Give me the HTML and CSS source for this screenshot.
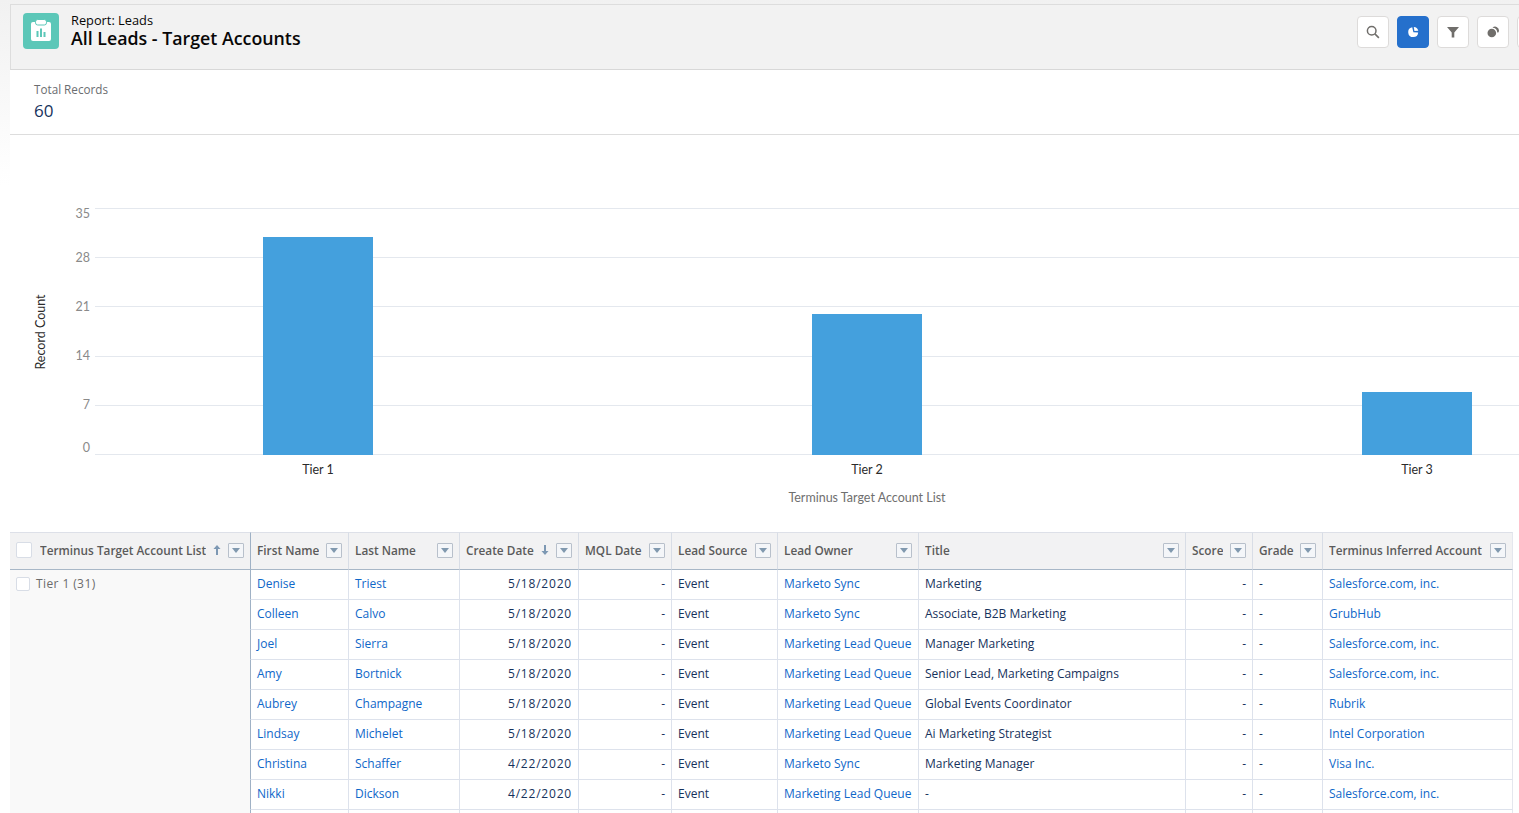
FILE: index.html
```html
<!DOCTYPE html>
<html lang="en">
<head>
    <meta charset="UTF-8">
    <title>All Leads - Target Accounts</title>
    <link rel="stylesheet" href="styles.css">
</head>
<body>
<div class="report">
    <!-- Header -->
    <div class="page-header">
        <div class="report-icon">
            <svg width="36" height="36" viewBox="0 0 36 36">
                <path d="M10 9h16a2 2 0 0 1 2 2v15a2 2 0 0 1-2 2H10a2 2 0 0 1-2-2V11a2 2 0 0 1 2-2z" fill="#fff"/>
                <rect x="12.5" y="6.5" width="11" height="5.5" rx="2.2" fill="#fff" stroke="#5cc7b8" stroke-width="1"/>
                <rect x="13.5" y="18" width="2" height="6" fill="#5cc7b8"/>
                <rect x="17" y="15.5" width="2" height="8.5" fill="#5cc7b8"/>
                <rect x="20.5" y="19" width="2" height="5" fill="#5cc7b8"/>
            </svg>
        </div>
        <div class="titles">
            <div class="eyebrow">Report: Leads</div>
            <h1>All Leads - Target Accounts</h1>
        </div>
        <div class="toolbar">
            <button class="tool">
                <svg width="14" height="14" viewBox="0 0 14 14"><circle cx="5.7" cy="5.7" r="4.3" fill="none" stroke="#706e6b" stroke-width="1.5"/><path d="M8.9 8.9l4 4" stroke="#706e6b" stroke-width="1.6"/></svg>
            </button>
            <button class="tool tool-active">
                <svg width="14" height="14" viewBox="0 0 14 14"><path d="M6.200 2.200a5 5 0 1 0 6 5.300L7.400 7.200z" fill="#fff"/><path d="M7.800 2a5 5 0 0 1 4.500 3.700L8.400 5.900z" fill="#fff"/></svg>
            </button>
            <button class="tool">
                <svg width="14" height="14" viewBox="0 0 14 14"><path d="M1 2h12L8.300 7.400V12.500H5.700V7.400z" fill="#706e6b"/></svg>
            </button>
            <button class="tool">
                <svg width="14" height="14" viewBox="0 0 14 14"><path d="M6.500 2.800a3.800 3.800 0 0 1 6.500 2.700 3 3 0 0 1-.7 2l-1-.1a5 5 0 0 0-4.800-4.600z" fill="#706e6b"/><circle cx="5.800" cy="8" r="4.300" fill="#706e6b"/></svg>
            </button>
            <button class="tool"></button>
        </div>
    </div>

    <!-- Summary -->
    <div class="summary">
        <div class="summary-label">Total Records</div>
        <div class="summary-value">60</div>
    </div>

    <!-- Chart -->
    <div class="chart">
        <svg width="1509" height="397" viewBox="10 135 1509 397">
            <g class="grid">
                <line x1="95" x2="1519" y1="208.500" y2="208.500"/>
                <line x1="95" x2="1519" y1="257.500" y2="257.500"/>
                <line x1="95" x2="1519" y1="306.500" y2="306.500"/>
                <line x1="95" x2="1519" y1="356.500" y2="356.500"/>
                <line x1="95" x2="1519" y1="405.500" y2="405.500"/>
                <line x1="95" x2="1519" y1="454.500" y2="454.500"/>
            </g>
            <g class="ticks">
                <text x="90" y="218">35</text>
                <text x="90" y="262">28</text>
                <text x="90" y="311">21</text>
                <text x="90" y="360">14</text>
                <text x="90" y="409">7</text>
                <text x="90" y="452">0</text>
            </g>
            <g class="bars">
                <rect x="263" y="237" width="110" height="218"/>
                <rect x="812" y="314" width="110" height="141"/>
                <rect x="1362" y="392" width="110" height="63"/>
            </g>
            <g class="labels">
                <text x="318" y="474">Tier 1</text>
                <text x="867" y="474">Tier 2</text>
                <text x="1417" y="474">Tier 3</text>
            </g>
            <text class="axis-title" x="867" y="502">Terminus Target Account List</text>
            <text class="axis-title-y" transform="translate(45 332) rotate(-90)">Record Count</text>
        </svg>
    </div>

    <!-- Table -->
    <table class="leads">
        <colgroup>
            <col class="c-group"><col class="c-first"><col class="c-last"><col class="c-date"><col class="c-mql"><col class="c-source"><col class="c-owner"><col class="c-title"><col class="c-score"><col class="c-grade"><col class="c-account">
        </colgroup>
        <thead>
            <tr>
                <th class="th-group"><div class="th-in"><span class="check"></span><span class="th-label">Terminus Target Account List</span><svg class="sort" width="8" height="10" viewBox="0 0 8 10"><path d="M4 0L7.500 4H5V10H3V4H.5z"/></svg><span class="menu"></span></div></th>
                <th><div class="th-in"><span class="th-label">First Name</span><span class="menu"></span></div></th>
                <th><div class="th-in"><span class="th-label">Last Name</span><span class="menu"></span></div></th>
                <th><div class="th-in"><span class="th-label">Create Date</span><svg class="sort" width="8" height="10" viewBox="0 0 8 10"><path d="M4 10L7.500 6H5V0H3V6H.5z"/></svg><span class="menu"></span></div></th>
                <th><div class="th-in"><span class="th-label">MQL Date</span><span class="menu"></span></div></th>
                <th><div class="th-in"><span class="th-label">Lead Source</span><span class="menu"></span></div></th>
                <th><div class="th-in"><span class="th-label">Lead Owner</span><span class="menu"></span></div></th>
                <th><div class="th-in"><span class="th-label">Title</span><span class="menu"></span></div></th>
                <th><div class="th-in"><span class="th-label">Score</span><span class="menu"></span></div></th>
                <th><div class="th-in"><span class="th-label">Grade</span><span class="menu"></span></div></th>
                <th><div class="th-in"><span class="th-label">Terminus Inferred Account</span><span class="menu"></span></div></th>
            </tr>
        </thead>
        <tbody>
            <tr>
                <td class="group-cell" rowspan="9"><div class="group-in"><span class="check check-small"></span>Tier 1 (31)</div></td>
                <td><a href="#">Denise</a></td><td><a href="#">Triest</a></td><td class="num date">5/18/2020</td><td class="num">-</td><td>Event</td><td><a href="#">Marketo Sync</a></td><td>Marketing</td><td class="num">-</td><td>-</td><td><a href="#">Salesforce.com, inc.</a></td>
            </tr>
            <tr>
                <td><a href="#">Colleen</a></td><td><a href="#">Calvo</a></td><td class="num date">5/18/2020</td><td class="num">-</td><td>Event</td><td><a href="#">Marketo Sync</a></td><td>Associate, B2B Marketing</td><td class="num">-</td><td>-</td><td><a href="#">GrubHub</a></td>
            </tr>
            <tr>
                <td><a href="#">Joel</a></td><td><a href="#">Sierra</a></td><td class="num date">5/18/2020</td><td class="num">-</td><td>Event</td><td><a href="#">Marketing Lead Queue</a></td><td>Manager Marketing</td><td class="num">-</td><td>-</td><td><a href="#">Salesforce.com, inc.</a></td>
            </tr>
            <tr>
                <td><a href="#">Amy</a></td><td><a href="#">Bortnick</a></td><td class="num date">5/18/2020</td><td class="num">-</td><td>Event</td><td><a href="#">Marketing Lead Queue</a></td><td>Senior Lead, Marketing Campaigns</td><td class="num">-</td><td>-</td><td><a href="#">Salesforce.com, inc.</a></td>
            </tr>
            <tr>
                <td><a href="#">Aubrey</a></td><td><a href="#">Champagne</a></td><td class="num date">5/18/2020</td><td class="num">-</td><td>Event</td><td><a href="#">Marketing Lead Queue</a></td><td>Global Events Coordinator</td><td class="num">-</td><td>-</td><td><a href="#">Rubrik</a></td>
            </tr>
            <tr>
                <td><a href="#">Lindsay</a></td><td><a href="#">Michelet</a></td><td class="num date">5/18/2020</td><td class="num">-</td><td>Event</td><td><a href="#">Marketing Lead Queue</a></td><td>Ai Marketing Strategist</td><td class="num">-</td><td>-</td><td><a href="#">Intel Corporation</a></td>
            </tr>
            <tr>
                <td><a href="#">Christina</a></td><td><a href="#">Schaffer</a></td><td class="num date">4/22/2020</td><td class="num">-</td><td>Event</td><td><a href="#">Marketo Sync</a></td><td>Marketing Manager</td><td class="num">-</td><td>-</td><td><a href="#">Visa Inc.</a></td>
            </tr>
            <tr>
                <td><a href="#">Nikki</a></td><td><a href="#">Dickson</a></td><td class="num date">4/22/2020</td><td class="num">-</td><td>Event</td><td><a href="#">Marketing Lead Queue</a></td><td>-</td><td class="num">-</td><td>-</td><td><a href="#">Salesforce.com, inc.</a></td>
            </tr>
            <tr>
                <td></td><td></td><td></td><td></td><td></td><td></td><td></td><td></td><td></td><td></td>
            </tr>
        </tbody>
    </table>
</div>
</body>
</html>
```

FILE: styles.css
```css
html, body {
    height: 100%;
    overflow: hidden;
}

body {
    margin: 0;
    background: linear-gradient(#f1f1f1, #fff 185px);
    font-family: "Open Sans", sans-serif;
    font-size: 12px;
    color: #16325c;
}

.report {
    margin-left: 10px;
    padding-top: 4px;
}

/* Header */
.page-header {
    display: flex;
    align-items: flex-start;
    height: 66px;
    padding: 8px 0 0 12px;
    box-sizing: border-box;
    background: #f2f2f2;
    border-top: 1px solid #dddddd;
    border-bottom: 1px solid #d8d8d8;
    border-left: 1px solid #dddddd;
    overflow: hidden;
}

.report-icon {
    width: 36px;
    height: 36px;
    flex: none;
    border-radius: 4px;
    background: #5cc7b8;
}

.report-icon svg {
    display: block;
}

.titles {
    margin-left: 12px;
    color: #080707;
}

.eyebrow {
    font-size: 12.800px;
    line-height: 15px;
}

h1 {
    margin: 0;
    font-size: 17.800px;
    line-height: 20px;
    font-weight: 600;
}

.toolbar {
    display: flex;
    gap: 8px;
    margin-left: auto;
    margin-top: 3px;
    margin-right: -30px;
}

.tool {
    display: flex;
    align-items: center;
    justify-content: center;
    width: 32px;
    height: 32px;
    padding: 0;
    flex: none;
    background: #fff;
    border: 1px solid #dddbda;
    border-radius: 4px;
}

.tool-active {
    background: #2570cc;
    border-color: #2570cc;
}

/* Summary */
.summary {
    height: 65px;
    padding: 11px 0 0 24px;
    box-sizing: border-box;
    background: #fff;
    border-bottom: 1px solid #dddddd;
}

.summary-label {
    color: #6b6d70;
    font-size: 11.700px;
    line-height: 16px;
}

.summary-value {
    margin-top: 3px;
    font-size: 17px;
    line-height: 22px;
}

/* Chart */
.chart {
    height: 397px;
    background: #fff;
}

.chart svg {
    display: block;
}

.grid line {
    stroke: #e4e8ee;
    stroke-width: 1;
}

.bars rect {
    fill: #44a0dd;
}

.chart text {
    font-family: "Lato", sans-serif;
    font-size: 12.500px;
}

.ticks text {
    fill: #8a8a8a;
    text-anchor: end;
}

.labels text {
    fill: #2b2b2b;
    text-anchor: middle;
}

.axis-title {
    fill: #6f6f6f;
    text-anchor: middle;
}

.axis-title-y {
    fill: #2b2b2b;
    text-anchor: middle;
}

/* Table */
.leads {
    width: 1503px;
    table-layout: fixed;
    border-collapse: separate;
    border-spacing: 0;
    background: #fff;
}

.c-group { width: 240px; }
.c-first { width: 98px; }
.c-last { width: 111px; }
.c-date { width: 119px; }
.c-mql { width: 93px; }
.c-source { width: 106px; }
.c-owner { width: 141px; }
.c-title { width: 267px; }
.c-score { width: 67px; }
.c-grade { width: 70px; }
.c-account { width: 191px; }

.leads th {
    height: 38px;
    padding: 0 6px 2px;
    box-sizing: border-box;
    background: #f2f2f3;
    border-top: 1px solid #dde0e8;
    border-bottom: 1px solid #a8b7c7;
    border-left: 1px solid #d8dde6;
    text-align: left;
    font-weight: 600;
    font-size: 11.800px;
    color: #5b5b5b;
}

.leads th.th-group {
    border-left: none;
}

.leads th.th-group + th {
    border-left-color: #9fb1c5;
}

.th-in {
    display: flex;
    align-items: center;
}

.th-label {
    white-space: nowrap;
    overflow: hidden;
}

.check {
    width: 14px;
    height: 14px;
    flex: none;
    margin-right: 8px;
    background: #fff;
    border: 1px solid #d8dde6;
    border-radius: 2px;
}

.check-small {
    width: 12px;
    height: 12px;
    margin-right: 6px;
    margin-top: 1px;
}

.sort {
    flex: none;
    margin-left: 7px;
    fill: #7d98b3;
}

.menu {
    position: relative;
    width: 14px;
    height: 13px;
    flex: none;
    margin-left: auto;
    background: #f4f6f9;
    border: 1px solid #b8c0cb;
    border-radius: 1px;
}

.menu::after {
    content: "";
    position: absolute;
    left: 3px;
    top: 4px;
    border-left: 4px solid transparent;
    border-right: 4px solid transparent;
    border-top: 5px solid #8199af;
}

.leads td {
    height: 30px;
    padding: 0 6px 2px;
    box-sizing: border-box;
    border-bottom: 1px solid #dde2ec;
    border-left: 1px solid #dde2ec;
    white-space: nowrap;
    overflow: hidden;
    color: #16325c;
}

.leads th:last-child,
.leads td:last-child {
    border-right: 1px solid #e4e7ee;
}

.leads td.num {
    text-align: right;
}

/* dates are wider in the report font */
.leads td.date {
    letter-spacing: 0.800px;
}

/* first name column sits against the group column */
.leads tbody tr td:first-child,
.leads td.group-cell + td {
    border-left-color: #9fb1c5;
}

.leads tbody tr td.group-cell {
    vertical-align: top;
    background: #f9f9f9;
    border-left: none;
    border-bottom: none;
    color: #6b6b6b;
}

.group-in {
    display: flex;
    align-items: flex-start;
    padding-top: 6px;
    line-height: 16px;
    letter-spacing: 0.400px;
}

a {
    color: #0f67c9;
    text-decoration: none;
}
```
